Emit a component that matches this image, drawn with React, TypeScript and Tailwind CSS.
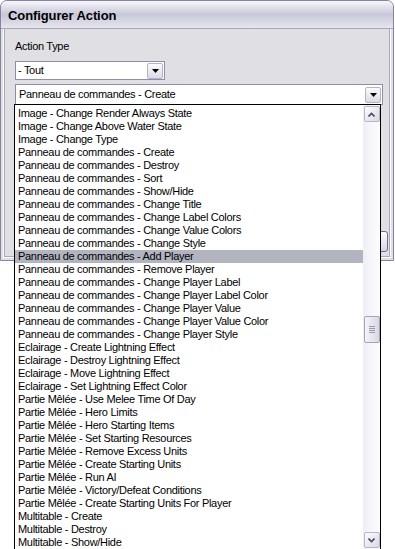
import React from "react";

const items = [
  "Image - Change Render Always State",
  "Image - Change Above Water State",
  "Image - Change Type",
  "Panneau de commandes - Create",
  "Panneau de commandes - Destroy",
  "Panneau de commandes - Sort",
  "Panneau de commandes - Show/Hide",
  "Panneau de commandes - Change Title",
  "Panneau de commandes - Change Label Colors",
  "Panneau de commandes - Change Value Colors",
  "Panneau de commandes - Change Style",
  "Panneau de commandes - Add Player",
  "Panneau de commandes - Remove Player",
  "Panneau de commandes - Change Player Label",
  "Panneau de commandes - Change Player Label Color",
  "Panneau de commandes - Change Player Value",
  "Panneau de commandes - Change Player Value Color",
  "Panneau de commandes - Change Player Style",
  "Eclairage - Create Lightning Effect",
  "Eclairage - Destroy Lightning Effect",
  "Eclairage - Move Lightning Effect",
  "Eclairage - Set Lightning Effect Color",
  "Partie Mêlée - Use Melee Time Of Day",
  "Partie Mêlée - Hero Limits",
  "Partie Mêlée - Hero Starting Items",
  "Partie Mêlée - Set Starting Resources",
  "Partie Mêlée - Remove Excess Units",
  "Partie Mêlée - Create Starting Units",
  "Partie Mêlée - Run AI",
  "Partie Mêlée - Victory/Defeat Conditions",
  "Partie Mêlée - Create Starting Units For Player",
  "Multitable - Create",
  "Multitable - Destroy",
  "Multitable - Show/Hide",
];

const SELECTED = 11;

function DropButton() {
  return (
    <div className="w-[16px] h-[16px] rounded-[2px] border border-[#b4b3c6] bg-gradient-to-b from-[#fbfbfd] to-[#dcdbe6] flex items-center justify-center">
      <svg width="7" height="4" viewBox="0 0 7 4">
        <path d="M0 0H7L3.5 4Z" fill="#000" />
      </svg>
    </div>
  );
}

function ScrollButton({ up }: { up: boolean }) {
  return (
    <div className="w-[16px] h-[16px] rounded-[2px] border border-[#b7b6ca] bg-gradient-to-br from-[#fdfdfe] to-[#d9d8e5] flex items-center justify-center">
      <svg width="7" height="5" viewBox="0 0 7 5">
        <path
          d={up ? "M0.5 4.5L3.5 1.5L6.5 4.5" : "M0.5 0.5L3.5 3.5L6.5 0.5"}
          fill="none"
          stroke="#4a4a62"
          strokeWidth="1.6"
        />
      </svg>
    </div>
  );
}

export default function App() {
  return (
    <div
      className="relative w-[395px] h-[549px] overflow-hidden bg-white text-[11px] text-black"
      style={{ fontFamily: "'Liberation Sans', Arial, sans-serif" }}
    >
      {/* Window */}
      <div className="w-[394px] h-[261px] rounded-t-[7px] border border-[#8584a0] bg-[#e0dfe3] flex flex-col overflow-hidden">
        {/* Title bar */}
        <div className="h-[28px] shrink-0 bg-gradient-to-b from-[#f7f7fa] via-[#c8c7d9] to-[#e6e6ee] border-b border-[#a8a7bd] flex items-center pl-[7px] pt-[3px]">
          <span className="text-[13px] font-bold tracking-[-0.1px]">Configurer Action</span>
        </div>

        {/* Body */}
        <div className="flex-1 mx-[2px] mb-[2px] border-x border-b border-[#fdfdfe] flex flex-col">
          <div className="flex-1 border-x border-b border-[#a9a8bf] pl-[10px] pt-[11px] flex flex-col">
            <div className="h-[13px] leading-[13px] tracking-[-0.3px]">Action Type</div>

            {/* Small combo */}
            <div className="mt-[8px] w-[150px] h-[19px] bg-white border border-[#8f8ea8] flex items-center justify-between pl-[2px] pr-[1px]">
              <span className="tracking-[-0.3px]">- Tout</span>
              <DropButton />
            </div>

            {/* Big combo */}
            <div className="mt-[4px] w-[368px] h-[21px] bg-white border border-[#8f8ea8] flex items-center justify-between pl-[3px] pr-[1px]">
              <span className="tracking-[-0.3px]">Panneau de commandes - Create</span>
              <DropButton />
            </div>

            {/* Button row partially hidden by the list */}
            <div className="mt-auto mb-[4px] self-end mr-[1px] w-[80px] h-[21px] rounded-[3px] border border-[#6f6e88] bg-gradient-to-b from-[#fdfdfe] to-[#d7d6e2]" />
          </div>
        </div>
      </div>

      {/* Dropdown list (overlays the dialog) */}
      <div className="absolute left-[14px] top-[104px] w-[367px] h-[446px] border border-black bg-white flex">
        <div className="flex-1 pt-[2px] flex flex-col">
          {items.map((it, i) => (
            <div
              key={it}
              className={
                "h-[13px] leading-[13px] pl-[3px] tracking-[-0.3px] whitespace-nowrap " +
                (i === SELECTED ? "bg-[#b2b4bf]" : "")
              }
            >
              {it}
            </div>
          ))}
        </div>

        {/* Scrollbar */}
        <div className="w-[17px] h-full bg-gradient-to-r from-[#eeeef5] via-[#f7f7fb] to-[#fcfcfe] flex flex-col items-center py-[1px]">
          <ScrollButton up />
          <div className="flex-1 w-full flex flex-col items-center">
            <div className="mt-[194px] w-[16px] h-[27px] rounded-[2px] border border-[#a3a2b8] bg-gradient-to-r from-[#f4f4f8] to-[#d9d8e6] flex items-center justify-center">
              <div className="flex flex-col gap-[1px]">
                <div className="w-[6px] h-px bg-[#9a99b0]" />
                <div className="w-[6px] h-px bg-[#9a99b0]" />
                <div className="w-[6px] h-px bg-[#9a99b0]" />
                <div className="w-[6px] h-px bg-[#9a99b0]" />
              </div>
            </div>
          </div>
          <ScrollButton up={false} />
        </div>
      </div>
    </div>
  );
}
